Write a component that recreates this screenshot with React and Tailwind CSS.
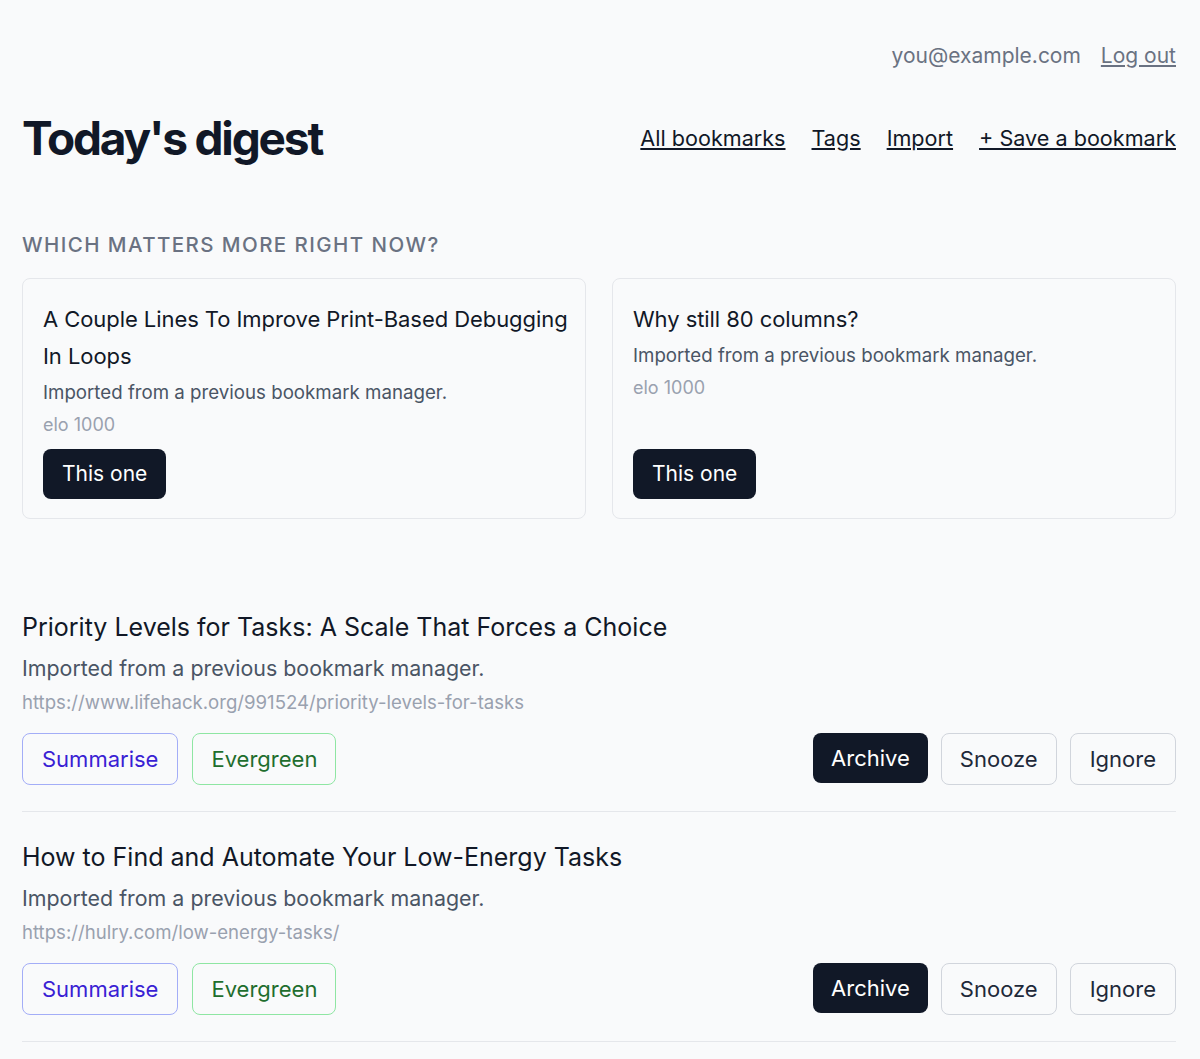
import React from "react";

const pair = [
  {
    title: "A Couple Lines To Improve Print-Based Debugging In Loops",
    note: "Imported from a previous bookmark manager.",
    elo: 1000,
  },
  {
    title: "Why still 80 columns?",
    note: "Imported from a previous bookmark manager.",
    elo: 1000,
  },
];

const items = [
  {
    title: "Priority Levels for Tasks: A Scale That Forces a Choice",
    note: "Imported from a previous bookmark manager.",
    url: "https://www.lifehack.org/991524/priority-levels-for-tasks",
  },
  {
    title: "How to Find and Automate Your Low-Energy Tasks",
    note: "Imported from a previous bookmark manager.",
    url: "https://hulry.com/low-energy-tasks/",
  },
];

const CompareCard = ({ bookmark }) => (
  <div className="flex flex-col rounded-[8px] border border-gray-200 pl-[20px] pr-[14px] pt-[22px] pb-[19px]">
    <h3 className="text-[22px] leading-[37px] tracking-[-0.003em] text-[#111827]">{bookmark.title}</h3>
    <p className="text-[18.7px] leading-[36px] text-gray-600">{bookmark.note}</p>
    <p className="text-[18px] leading-[28px] text-gray-400">elo {bookmark.elo}</p>
    <div className="mt-auto pt-[10px]">
      <button className="h-[50px] rounded-[8px] bg-[#111827] px-[19px] text-[21px] text-white">
        This one
      </button>
    </div>
  </div>
);

const DigestItem = ({ item }) => (
  <div className="border-b border-gray-200 pt-[25px] pb-[26px] first:pt-0">
    <h2 className="text-[25px] leading-[40px] text-[#111827]">{item.title}</h2>
    <p className="mt-[1px] text-[21.4px] leading-[40px] text-gray-600">{item.note}</p>
    <p className="text-[18.6px] leading-[28px] text-gray-400">{item.url}</p>
    <div className="mt-[17px] flex items-start justify-between">
      <div className="flex gap-[14px]">
        <button className="h-[52px] rounded-[8px] border-[1.5px] border-[#a3adf7] px-[19px] text-[22px] text-[#3a1fd4]">
          Summarise
        </button>
        <button className="h-[52px] rounded-[8px] border-[1.5px] border-[#8fe6a3] px-[18px] text-[22px] text-[#1f6e2e]">
          Evergreen
        </button>
      </div>
      <div className="flex gap-[13px]">
        <button className="h-[50px] rounded-[8px] bg-[#111827] px-[18px] text-[22px] text-white">
          Archive
        </button>
        <button className="h-[52px] rounded-[8px] border border-gray-300 px-[18px] text-[22px] text-gray-800">
          Snooze
        </button>
        <button className="h-[52px] rounded-[8px] border border-gray-300 px-[19px] text-[22px] text-gray-800">
          Ignore
        </button>
      </div>
    </div>
  </div>
);

export default function App() {
  return (
    <div className="min-h-screen bg-[#f9fafb] pl-[22px] pr-[24px] pt-[40px] font-['Inter',sans-serif]">
      <div className="flex justify-end gap-[20px] text-[21px] leading-[32px] text-gray-500">
        <span>you@example.com</span>
        <a href="#" className="underline">Log out</a>
      </div>

      <div className="mt-[38px] flex items-center justify-between">
        <h1 className="text-[46px] leading-[56px] font-bold tracking-[-0.047em] text-[#111827]">Today's digest</h1>
        <nav className="flex gap-[26px] text-[21.6px] text-[#111827]">
          <a href="#" className="underline">All bookmarks</a>
          <a href="#" className="underline">Tags</a>
          <a href="#" className="underline">Import</a>
          <a href="#" className="underline">+ Save a bookmark</a>
        </nav>
      </div>

      <h2 className="mt-[65px] text-[20.5px] leading-[28px] font-medium uppercase tracking-[0.07em] text-gray-500">
        Which matters more right now?
      </h2>
      <div className="mt-[19px] grid grid-cols-2 gap-[26px]">
        {pair.map((b) => (
          <CompareCard key={b.title} bookmark={b} />
        ))}
      </div>

      <div className="mt-[88px]">
        {items.map((item) => (
          <DigestItem key={item.url} item={item} />
        ))}
      </div>
    </div>
  );
}
